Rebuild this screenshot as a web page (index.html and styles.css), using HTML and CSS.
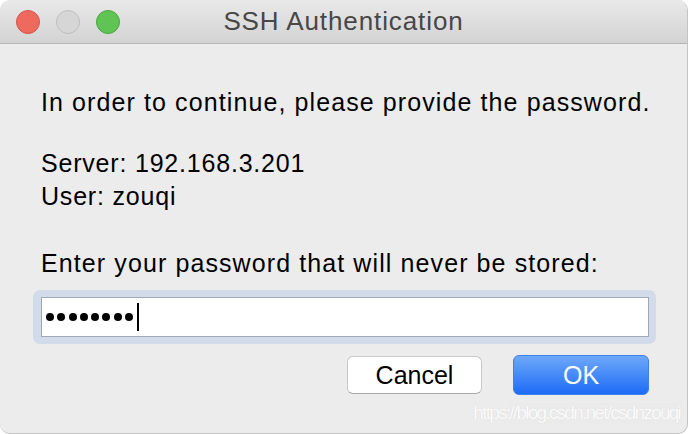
FILE: index.html
```html
<!DOCTYPE html>
<html>
<head>
<meta charset="utf-8">
<link rel="stylesheet" href="styles.css">
</head>
<body>
<div class="window">
  <div class="titlebar">
    <div class="lights">
      <span class="light red"></span>
      <span class="light grey"></span>
      <span class="light green"></span>
    </div>
    <div class="title">SSH Authentication</div>
  </div>
  <div class="content">
    <p class="msg">In order to continue, please provide the password.</p>
    <div class="info">
      <div>Server: 192.168.3.201</div>
      <div>User: zouqi</div>
    </div>
    <p class="prompt">Enter your password that will never be stored:</p>
    <div class="focus">
      <div class="field">
        <span class="dot"></span><span class="dot"></span><span class="dot"></span><span class="dot"></span>
        <span class="dot"></span><span class="dot"></span><span class="dot"></span><span class="dot"></span>
        <span class="caret"></span>
      </div>
    </div>
    <div class="buttons">
      <button class="btn cancel">Cancel</button>
      <button class="btn ok">OK</button>
    </div>
  </div>
  <div class="watermark">https://blog.csdn.net/csdnzouqi</div>
</div>
</body>
</html>
```
FILE: styles.css
```css
html, body {
  margin: 0;
  padding: 0;
  background: #ffffff;
}
body {
  width: 690px;
  height: 434px;
  overflow: hidden;
  font-family: "Liberation Sans", Arial, sans-serif;
}
.window {
  position: relative;
  width: 688px;
  height: 434px;
  background: #ececec;
  border: 1px solid #c4c4c4;
  border-top: none;
  border-left: none;
  border-radius: 10px;
  box-sizing: border-box;
  overflow: hidden;
}
.titlebar {
  height: 44px;
  background: linear-gradient(#e9e9e9, #d3d3d3);
  border-bottom: 1px solid #b5b5b5;
  box-sizing: border-box;
  display: flex;
  align-items: center;
  position: relative;
}
.lights {
  display: flex;
  gap: 16px;
  padding-left: 16px;
  margin-top: 1px;
}
.light {
  width: 24px;
  height: 24px;
  border-radius: 50%;
  box-sizing: border-box;
}
.red { background: #ee6a5e; border: 1px solid #d5534a; }
.grey { background: #d6d6d6; border: 1px solid #bdbdbd; }
.green { background: #5fc454; border: 1px solid #4aa63f; }
.title {
  position: absolute;
  left: 0;
  right: 0;
  top: 0;
  bottom: 0;
  display: flex;
  align-items: center;
  justify-content: center;
  font-size: 26px;
  letter-spacing: 0.9px;
  color: #474747;
}
.content {
  padding: 0 0 0 41px;
  color: #000;
  font-size: 25px;
  letter-spacing: 1.1px;
  white-space: nowrap;
}
.msg {
  margin: 43px 0 0 0;
  line-height: 30px;
}
.info {
  margin-top: 30px;
  line-height: 33px;
  letter-spacing: 0.8px;
}
.prompt {
  margin: 35px 0 0 0;
  line-height: 30px;
}
.focus {
  margin: 12px 0 0 -8px;
  width: 623px;
  height: 54px;
  background: #d2dbea;
  border-radius: 7px;
  padding: 7px 7px 7px 8px;
  box-sizing: border-box;
}
.field {
  height: 40px;
  background: #fff;
  border: 1px solid #a0a7b5;
  box-sizing: border-box;
  display: flex;
  align-items: center;
  padding-left: 4px;
  gap: 3.3px;
}
.dot {
  width: 8px;
  height: 8px;
  border-radius: 50%;
  background: #000;
}
.caret {
  width: 2px;
  height: 28px;
  background: #000;
  margin-left: 1px;
}
.buttons {
  display: flex;
  justify-content: flex-end;
  align-items: center;
  gap: 31px;
  margin-top: 11px;
  width: 608px;
}
.btn {
  font-family: "Liberation Sans", Arial, sans-serif;
  font-size: 25px;
  border-radius: 6px;
  box-sizing: border-box;
  padding: 0;
}
.cancel {
  width: 135px;
  height: 38px;
  background: #fff;
  color: #000;
  border: 1px solid #c8c8c8;
  border-bottom-color: #a8a8a8;
}
.ok {
  width: 136px;
  height: 40px;
  background: linear-gradient(#6ea8fa, #1d6cf5);
  color: #fff;
  border: 1px solid #3f7ff0;
}
.watermark {
  position: absolute;
  right: 7px;
  bottom: 9px;
  font-size: 19px;
  color: #fff;
  opacity: 0.8;
  letter-spacing: -1.75px;
  text-shadow: 0 0 1px rgba(0,0,0,0.15);
}
```
